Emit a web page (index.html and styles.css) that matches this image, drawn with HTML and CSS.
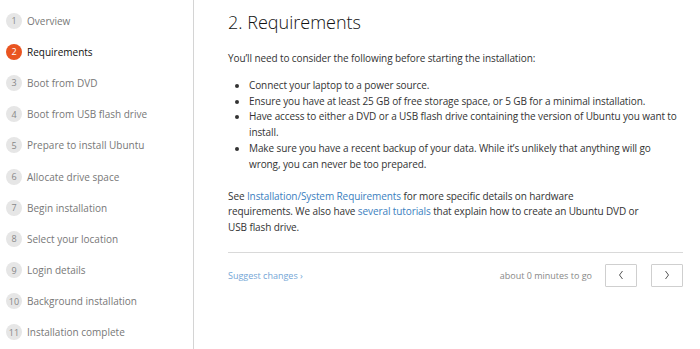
FILE: index.html
```html
<!DOCTYPE html>
<html lang="en">
<head>
<meta charset="utf-8">
<title>Install Ubuntu desktop</title>
<link rel="stylesheet" href="styles.css">
</head>
<body>
<div class="page">
  <nav class="sidebar">
    <ol class="steps">
      <li class="step"><span class="num">1</span><span class="label">Overview</span></li>
      <li class="step active"><span class="num">2</span><span class="label">Requirements</span></li>
      <li class="step"><span class="num">3</span><span class="label">Boot from DVD</span></li>
      <li class="step"><span class="num">4</span><span class="label">Boot from USB flash drive</span></li>
      <li class="step"><span class="num">5</span><span class="label">Prepare to install Ubuntu</span></li>
      <li class="step"><span class="num">6</span><span class="label">Allocate drive space</span></li>
      <li class="step"><span class="num">7</span><span class="label">Begin installation</span></li>
      <li class="step"><span class="num">8</span><span class="label">Select your location</span></li>
      <li class="step"><span class="num">9</span><span class="label">Login details</span></li>
      <li class="step"><span class="num">10</span><span class="label">Background installation</span></li>
      <li class="step"><span class="num">11</span><span class="label">Installation complete</span></li>
    </ol>
  </nav>
  <main class="content">
    <h2 class="title">2. Requirements</h2>
    <p class="intro">You’ll need to consider the following before starting the installation:</p>
    <ul class="reqs">
      <li>Connect your laptop to a power source.</li>
      <li>Ensure you have at least 25 GB of free storage space, or 5 GB for a minimal installation.</li>
      <li>Have access to either a DVD or a USB flash drive containing the version of Ubuntu you want to<br>install.</li>
      <li>Make sure you have a recent backup of your data. While it’s unlikely that anything will go<br>wrong, you can never be too prepared.</li>
    </ul>
    <p class="see">See <a href="#">Installation/System Requirements</a> for more specific details on hardware<br>requirements. We also have <a href="#">several tutorials</a> that explain how to create an Ubuntu DVD or<br>USB flash drive.</p>
    <div class="footer">
      <a class="suggest" href="#">Suggest changes ›</a>
      <div class="nav">
        <span class="time">about 0 minutes to go</span>
        <button class="btn" aria-label="Previous"><svg width="8" height="10" viewBox="0 0 8 10"><path d="M5.5 1 L2.5 5 L5.5 9" fill="none" stroke="#555" stroke-width="1"/></svg></button>
        <button class="btn" aria-label="Next"><svg width="8" height="10" viewBox="0 0 8 10"><path d="M2.5 1 L5.5 5 L2.5 9" fill="none" stroke="#555" stroke-width="1"/></svg></button>
      </div>
    </div>
  </main>
</div>
</body>
</html>
```
FILE: styles.css
```css
html, body {
  margin: 0;
  padding: 0;
  background: #fff;
}
body {
  font-family: "Open Sans", "Noto Sans", sans-serif;
  color: #333;
}
.page {
  display: flex;
  height: 349px;
  overflow: hidden;
}
.sidebar {
  width: 193px;
  flex: 0 0 193px;
  border-right: 1px solid #d4d4d4;
}
.steps {
  list-style: none;
  margin: 0;
  padding: 5px 0 0 6px;
  display: flex;
  flex-direction: column;
}
.step {
  height: 31.2px;
  display: flex;
  align-items: center;
  gap: 5px;
  font-size: 10px;
  color: #777;
}
.num {
  width: 16px;
  height: 16px;
  border-radius: 50%;
  background: #e6e6e6;
  color: #888;
  font-size: 9px;
  display: flex;
  align-items: center;
  justify-content: center;
  flex: 0 0 16px;
}
.active .num {
  background: #e95420;
  color: #fff;
}
.active .label {
  color: #111;
}
.content {
  flex: 1;
  min-width: 0;
  padding: 0 17px 0 34px;
}
.title {
  font-weight: 300;
  font-size: 18px;
  color: #111;
  margin: 9px 0 0;
  line-height: 26px;
}
.intro, .see, .reqs {
  font-size: 10px;
  line-height: 15.8px;
  letter-spacing: -0.1px;
}
.intro {
  margin: 16px 0 0;
}
.reqs {
  margin: 11px 0 0;
  padding-left: 21px;
}
.reqs li {
  white-space: nowrap;
}
.see {
  margin: 16px 0 0;
}
a {
  color: #3b80c0;
  text-decoration: none;
}
.footer {
  margin-top: 16px;
  border-top: 1px solid #d9d9d9;
  padding-top: 11px;
  display: flex;
  justify-content: space-between;
  align-items: center;
}
.suggest {
  font-size: 9px;
  color: #74a6d6;
}
.nav {
  display: flex;
  align-items: center;
}
.time {
  font-size: 9px;
  color: #888;
  margin-right: 13px;
}
.btn {
  width: 32px;
  height: 23px;
  border: 1px solid #cfcfcf;
  background: #fff;
  border-radius: 1px;
  padding: 0;
  display: flex;
  align-items: center;
  justify-content: center;
}
.btn + .btn {
  margin-left: 14px;
}
```
